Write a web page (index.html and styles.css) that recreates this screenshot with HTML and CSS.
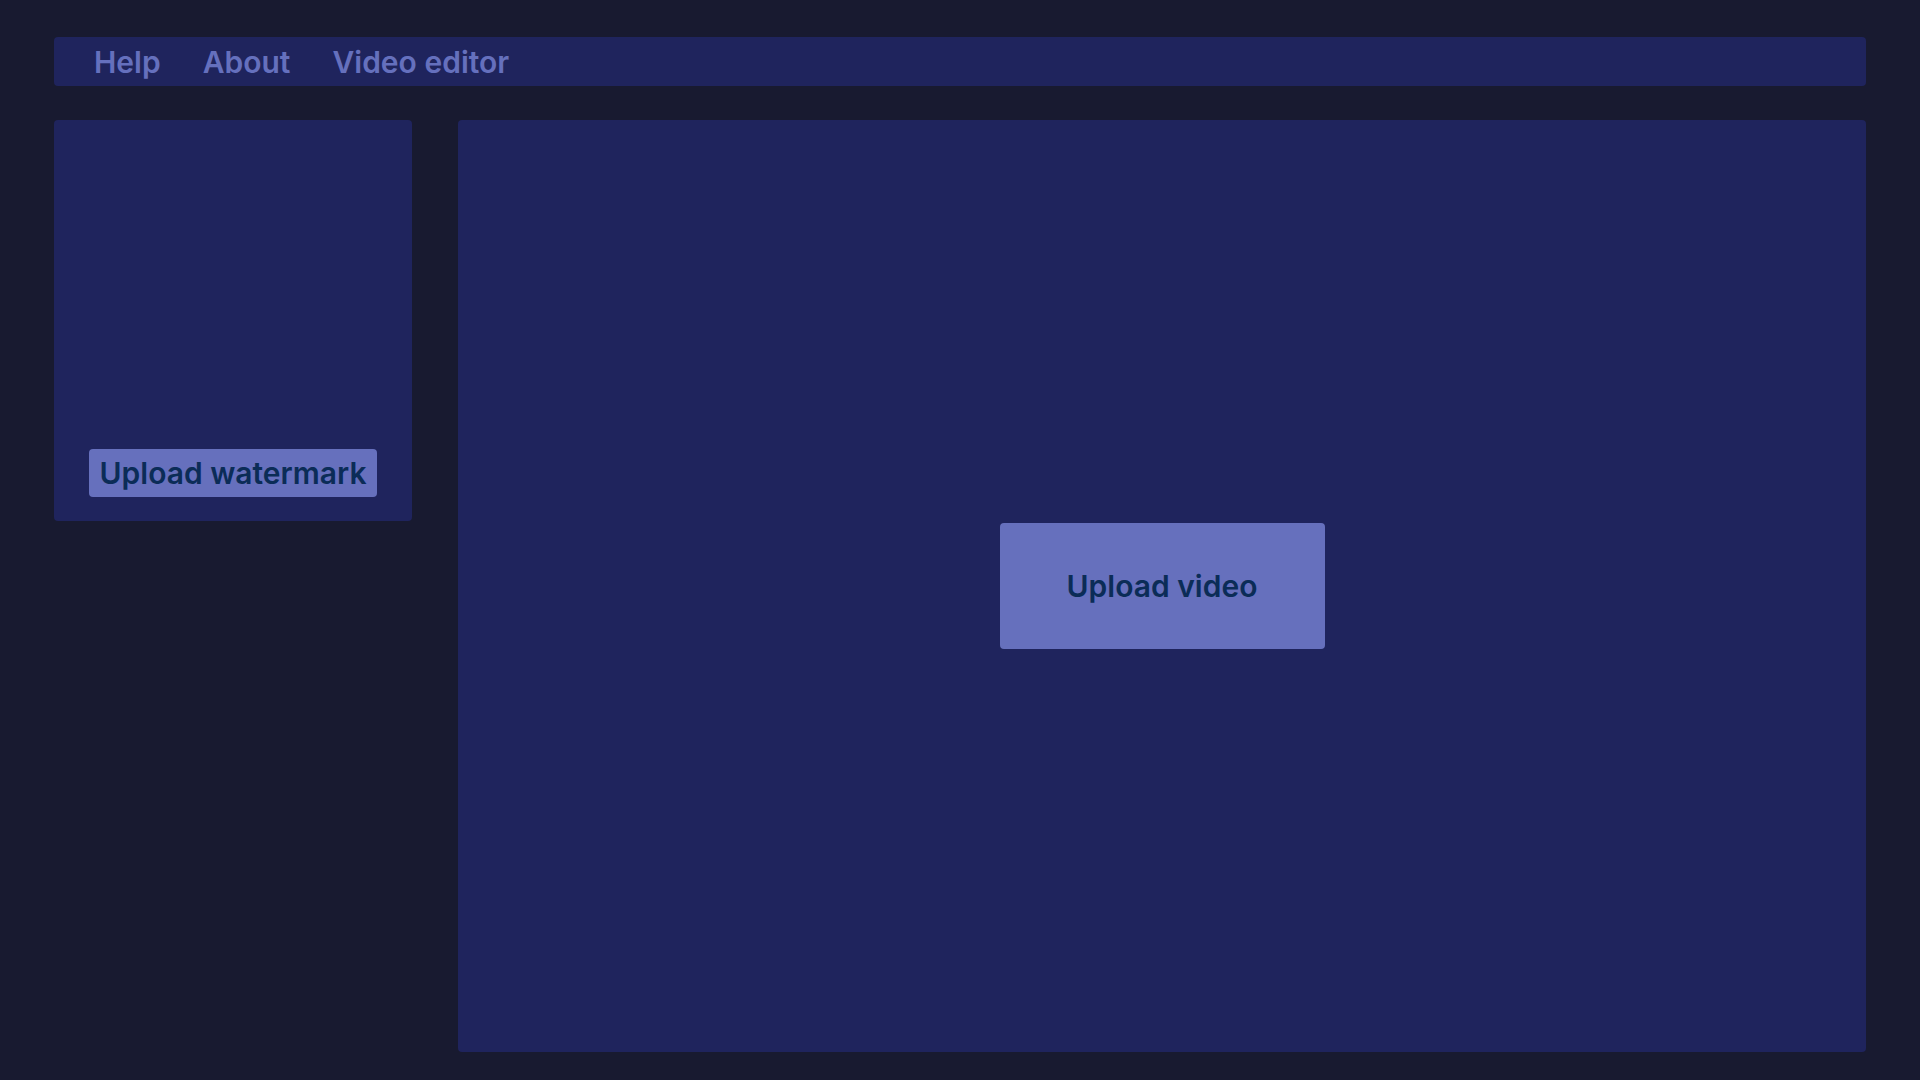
FILE: index.html
```html
<!DOCTYPE html>
<html lang="en">
<head>
<meta charset="utf-8">
<title>Video editor</title>
<link rel="stylesheet" href="styles.css">
</head>
<body>
<nav class="topnav">
  <a class="nav-link" href="#">Help</a>
  <a class="nav-link" href="#">About</a>
  <a class="nav-link" href="#">Video editor</a>
</nav>
<div class="workspace">
  <aside class="sidebar">
    <button class="btn btn-watermark">Upload watermark</button>
  </aside>
  <main class="stage">
    <button class="btn btn-video">Upload video</button>
  </main>
</div>
</body>
</html>
```
FILE: styles.css
```css
* { box-sizing: border-box; }
html, body { margin: 0; height: 100%; }
body {
  background: #181a30;
  padding: 37px 54px 28px;
  font-family: Inter, "Noto Sans", sans-serif;
  display: flex;
  flex-direction: column;
}
.topnav {
  height: 49px;
  background: #1f245d;
  border-radius: 4px;
  display: flex;
  align-items: center;
  padding: 0 19px;
  flex: none;
}
.nav-link {
  color: #6570bd;
  text-decoration: none;
  font-size: 30px;
  font-weight: 600;
  padding: 0 21px;
}
.workspace {
  margin-top: 34px;
  flex: 1;
  display: flex;
  gap: 46px;
  min-height: 0;
}
.sidebar {
  width: 358px;
  height: 401px;
  background: #1f245d;
  border-radius: 4px;
  display: flex;
  flex-direction: column;
  justify-content: flex-end;
  align-items: center;
  padding-bottom: 24px;
  flex: none;
}
.stage {
  flex: 1;
  background: #1f245d;
  border-radius: 4px;
  display: flex;
  align-items: center;
  justify-content: center;
}
.btn {
  border: none;
  background: #6670bd;
  color: #0b2c57;
  font-family: Inter, "Noto Sans", sans-serif;
  font-weight: 600;
  border-radius: 4px;
  cursor: pointer;
  padding: 0;
}
.btn-watermark {
  width: 288px;
  height: 48px;
  font-size: 30px;
}
.btn-video {
  width: 325px;
  height: 126px;
  font-size: 30px;
}
```
